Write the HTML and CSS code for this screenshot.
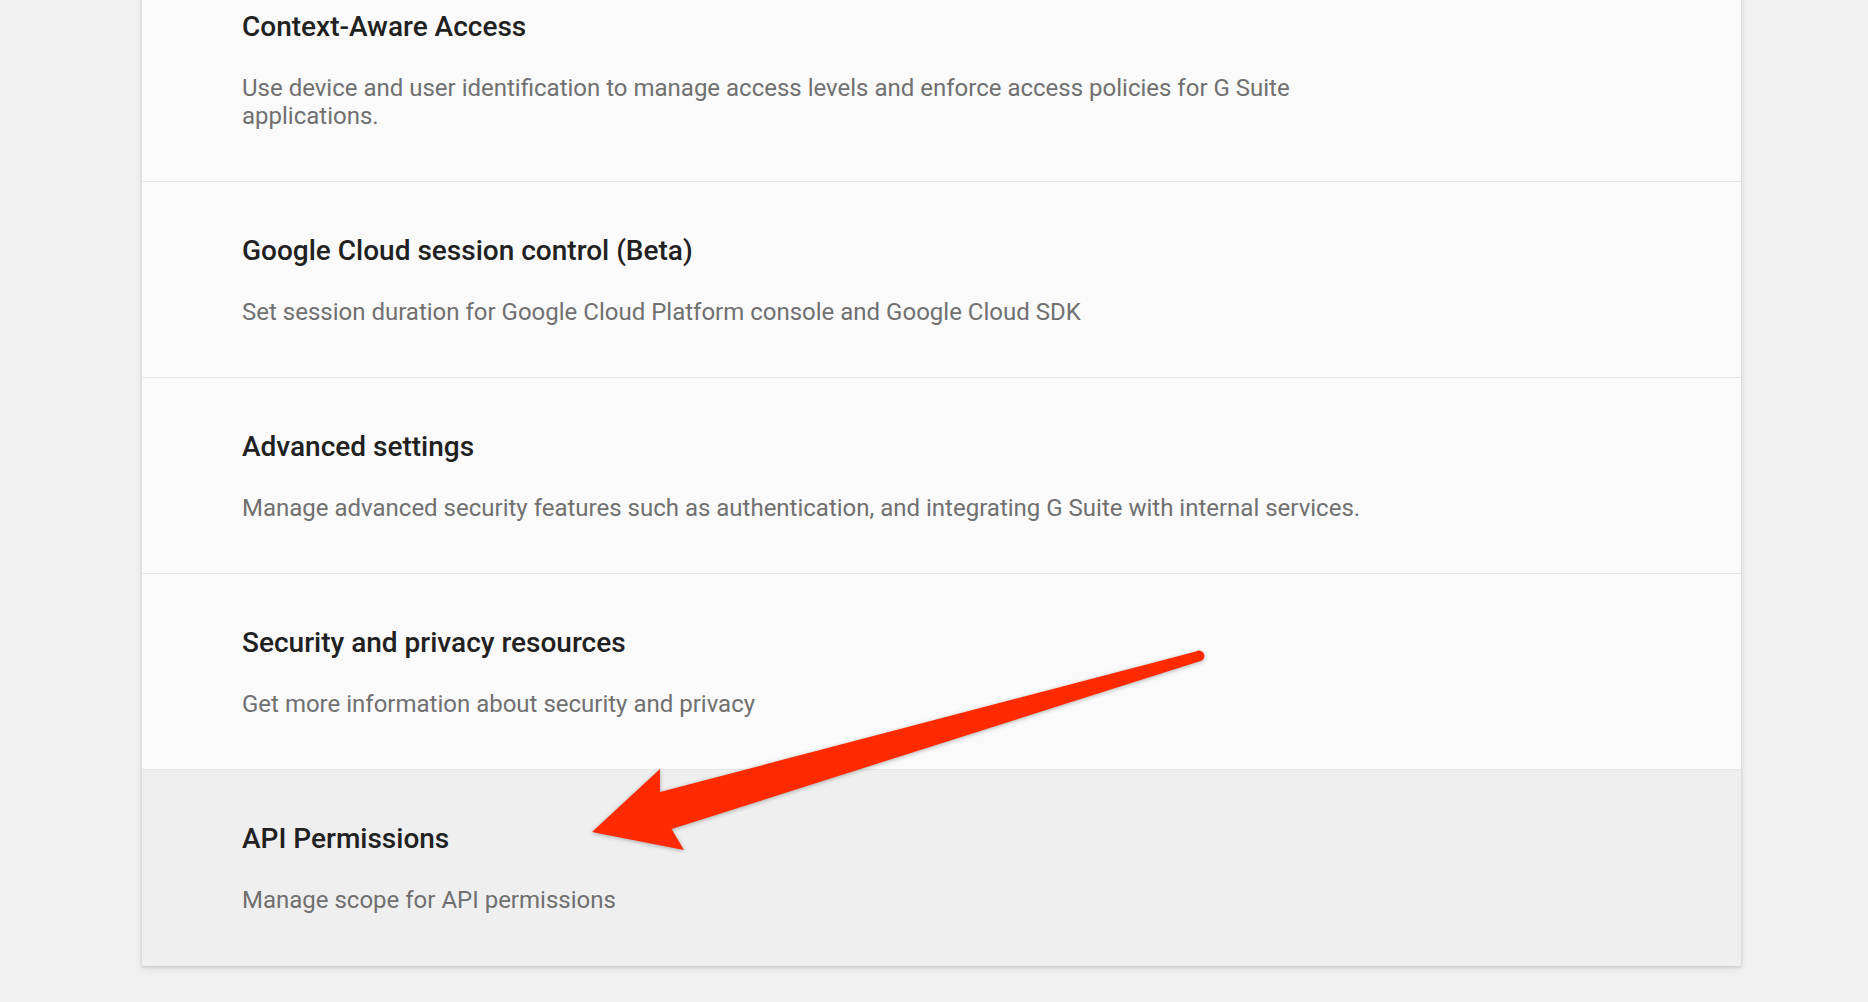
FILE: index.html
```html
<!DOCTYPE html>
<html lang="en">
<head>
<meta charset="utf-8">
<title>Security</title>
<link rel="stylesheet" href="styles.css">
</head>
<body>
<main class="page">
  <section class="card">
    <div class="row">
      <h2 class="row-title">Context-Aware Access</h2>
      <p class="row-desc">Use device and user identification to manage access levels and enforce access policies for G Suite applications.</p>
    </div>
    <div class="row">
      <h2 class="row-title">Google Cloud session control (Beta)</h2>
      <p class="row-desc">Set session duration for Google Cloud Platform console and Google Cloud SDK</p>
    </div>
    <div class="row">
      <h2 class="row-title">Advanced settings</h2>
      <p class="row-desc">Manage advanced security features such as authentication, and integrating G Suite with internal services.</p>
    </div>
    <div class="row">
      <h2 class="row-title">Security and privacy resources</h2>
      <p class="row-desc">Get more information about security and privacy</p>
    </div>
    <div class="row row-hover">
      <h2 class="row-title">API Permissions</h2>
      <p class="row-desc">Manage scope for API permissions</p>
    </div>
  </section>
</main>
<svg class="arrow" width="1868" height="1002" viewBox="0 0 1868 1002" aria-hidden="true">
  <path d="M1196 651.5 L660 792 L660 769 L592 832 L684 850 L671.5 829 L1202 660.5 A4.6 4.6 0 0 0 1196 651.5 Z" fill="#ff2a00"/>
</svg>
</body>
</html>
```

FILE: styles.css
```css
html, body {
  margin: 0;
  padding: 0;
}
body {
  background: #f1f1f1;
  font-family: Roboto, "Liberation Sans", Arial, sans-serif;
  min-height: 1002px;
  overflow: hidden;
}
.page {
  padding-left: 142px;
}
.card {
  width: 1599px;
  margin-top: -42px;
  background: #fafafa;
  box-shadow: 0 1px 3px rgba(0, 0, 0, 0.14), 0 3px 8px rgba(0, 0, 0, 0.08);
}
.row {
  padding: 52px 0 51px 100px;
  border-bottom: 1px solid #e6e6e6;
}
.row:last-child {
  border-bottom: none;
  padding-bottom: 52px;
}
.row-hover {
  background: #efefef;
}
.row-title {
  margin: 0;
  font-size: 28px;
  line-height: 34px;
  font-weight: 500;
  color: #212121;
}
.row-desc {
  margin: 30px 0 0;
  max-width: 1150px;
  font-size: 24px;
  line-height: 28px;
  font-weight: 400;
  color: #707070;
}
.arrow {
  position: absolute;
  left: 0;
  top: 0;
  pointer-events: none;
  filter: drop-shadow(0 1px 2px rgba(0, 0, 0, 0.3));
}
```
